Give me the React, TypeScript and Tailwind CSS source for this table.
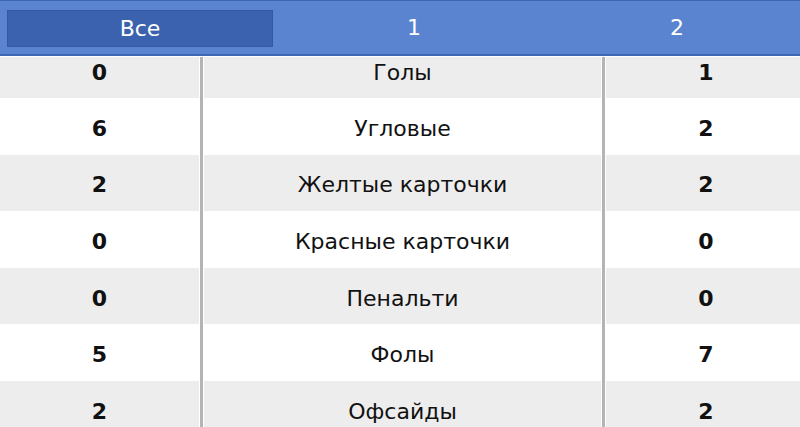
const rows: [string, string, string][] = [
  ['0', 'Голы', '1'],
  ['6', 'Угловые', '2'],
  ['2', 'Желтые карточки', '2'],
  ['0', 'Красные карточки', '0'],
  ['0', 'Пенальти', '0'],
  ['5', 'Фолы', '7'],
  ['2', 'Офсайды', '2'],
];

export default function App() {
  return (
    <div
      className="w-[800px] h-[427px] overflow-hidden bg-white text-[#111]"
      style={{ fontFamily: '"DejaVu Sans", Verdana, sans-serif' }}
    >
      {/* Шапка с вкладками */}
      <div className="h-[56px] border-t border-[#3f66b3] border-b-2 border-b-[#3f66b3] bg-[#5b84d0] grid grid-cols-[280px_268px_1fr] items-center text-white text-[22px]">
        <div className="pl-[7px] pr-[7px] pt-[1px]">
          <div className="h-[37px] bg-[#3a62ae] border border-[#3459a3] flex items-center justify-center">
            Все
          </div>
        </div>
        <div className="text-center">1</div>
        <div className="text-center pl-[6px]">2</div>
      </div>

      {/* Строки статистики */}
      <div className="grid grid-cols-[200px_3px_399px_3px_1fr] border-t border-white">
        {rows.map(([a, name, b], i) => {
          const bg = i % 2 === 0 ? 'bg-[#ededed]' : 'bg-white';
          const h = i === 0 ? 'h-[41px] pb-[10px]' : 'h-[56.6px] pt-[4px]';
          return (
            <div key={name} className="contents">
              <div className={`${bg} ${h} flex items-center justify-center font-bold text-[22px] border-r border-white`}>{a}</div>
              <div className="bg-[#b4b4b4]" />
              <div className={`${bg} ${h} flex items-center justify-center text-[22px] border-x border-white`}>{name}</div>
              <div className="bg-[#b4b4b4]" />
              <div className={`${bg} ${h} flex items-center justify-center font-bold text-[22px] border-l border-white pl-[6px]`}>{b}</div>
            </div>
          );
        })}
      </div>
    </div>
  );
}
